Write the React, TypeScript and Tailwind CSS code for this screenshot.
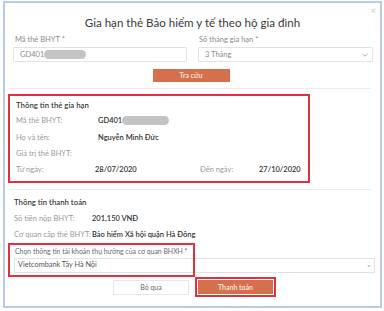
import React from "react";

const font = { fontFamily: "Lato, 'Open Sans', sans-serif" };

function Blur({ w }: { w: number }) {
  return (
    <span
      className="inline-block h-[9px] rounded-full bg-[#c4c4c4] blur-[0.6px] align-middle"
      style={{ width: w }}
    />
  );
}

function Chevron() {
  return (
    <svg width="6" height="4" viewBox="0 0 6 4" className="text-[#9a9a9a]">
      <path d="M0.5 0.8 L3 3.2 L5.5 0.8" fill="none" stroke="currentColor" strokeWidth="0.8" />
    </svg>
  );
}

export default function App() {
  return (
    <div className="w-[384px] h-[311px] bg-white overflow-hidden" style={font}>
      <div className="ml-[3px] mt-[1px] w-[379px] h-[307px] border-2 border-[#b5cbe7] bg-white relative">
        <span className="absolute right-[4px] top-[3px] text-[9px] leading-none text-[#c8c8c8]">×</span>
        {/* Title */}
        <div className="h-[30px] flex items-end justify-center pb-[4px]">
          <h1 className="text-[11.6px] leading-none text-[#3a3a3a]">Gia hạn thẻ Bảo hiểm y tế theo hộ gia đình</h1>
        </div>
        {/* Inputs */}
        <div className="flex gap-[11px] pl-[8px] pr-[5px] mt-[2px]">
          <div className="w-[174px]">
            <div className="text-[7.5px] leading-none text-[#8a8a8a] h-[12px] pl-[2px] pt-[1px]">Mã thẻ BHYT *</div>
            <div className="h-[15px] border border-[#e3e3e3] rounded-[1px] flex items-center pl-[6px] gap-0 text-[7.5px] text-[#8a8a8a]">
              <span>GD401</span>
              <Blur w={42} />
            </div>
          </div>
          <div className="w-[175px]">
            <div className="text-[7.5px] leading-none text-[#8a8a8a] h-[12px] pl-[1px] pt-[1px]">Số tháng gia hạn *</div>
            <div className="h-[15px] border border-[#e3e3e3] rounded-[1px] flex items-center justify-between pl-[6px] pr-[4px] text-[7.5px] text-[#8a8a8a]">
              <span>3 Tháng</span>
              <Chevron />
            </div>
          </div>
        </div>
        <div className="flex justify-center mt-[7px] pr-[3px]">
          <button className="w-[77px] h-[13px] bg-[#d4714c] text-white text-[7px] leading-none">Tra cứu</button>
        </div>
        <div className="mx-[4px] mt-[6px] mr-[9px] h-px bg-[#ececec]" />
        {/* Red box 1 */}
        <div className="ml-[3px] mt-[5px] w-[302px] h-[89px] border-2 border-[#e2303c] pl-[6px] text-[7.5px]">
          <div className="h-[16px] flex items-end text-[7.8px] text-[#3a3a3a] font-semibold leading-none pb-[2px]">Thông tin thẻ gia hạn</div>
          <div className="h-[17px] flex items-center">
            <span className="w-[82px] text-[#9a9a9a]">Mã thẻ BHYT:</span>
            <span className="text-[#333] font-semibold">GD401</span>
            <Blur w={47} />
          </div>
          <div className="h-[17px] flex items-center">
            <span className="w-[82px] text-[#9a9a9a]">Họ và tên:</span>
            <span className="text-[#333] font-semibold">Nguyễn Minh Đức</span>
          </div>
          <div className="h-[16px] flex items-center">
            <span className="w-[82px] text-[#9a9a9a]">Giá trị thẻ BHYT:</span>
          </div>
          <div className="h-[16px] flex items-center">
            <span className="w-[79px] text-[#9a9a9a]">Từ ngày:</span>
            <span className="w-[105px] text-[#333] font-semibold">28/07/2020</span>
            <span className="w-[59px] text-[#9a9a9a]">Đến ngày:</span>
            <span className="text-[#333] font-semibold">27/10/2020</span>
          </div>
        </div>
        <div className="ml-[4px] mr-[9px] mt-[6px] h-px bg-[#ececec]" />
        {/* Payment */}
        <div className="pl-[9px] text-[7.5px]">
          <div className="mt-[6px] h-[14px] flex items-center text-[7.8px] text-[#3a3a3a] font-semibold leading-none">Thông tin thanh toán</div>
          <div className="h-[17px] flex items-center">
            <span className="w-[78px] text-[#9a9a9a]">Số tiền nộp BHYT:</span>
            <span className="text-[#333] font-semibold">201,150 VNĐ</span>
          </div>
          <div className="h-[16px] flex items-center">
            <span className="w-[78px] text-[#9a9a9a]">Cơ quan cấp thẻ BHYT:</span>
            <span className="text-[#333] font-semibold">Bảo hiểm Xã hội quận Hà Đông</span>
          </div>
        </div>
        {/* Red box 2 with select */}
        <div className="relative ml-[3px] mr-[5px] mt-[0px] h-[34px] pt-[2px]">
          <div className="absolute left-0 top-0 w-[187px] h-[34px] border-2 border-[#e2303c] pointer-events-none z-10" />
          <div className="pl-[7px] text-[6.9px] leading-none text-[#6a6a6a] h-[13px] flex items-center">
            Chọn thông tin tài khoản thụ hưởng của cơ quan BHXH *
          </div>
          <div className="ml-[6px] h-[15px] border border-[#e3e3e3] flex items-center justify-between pl-[3px] pr-[4px] text-[7.3px] text-[#555]">
            <span>Vietcombank Tây Hà Nội</span>
            <span className="text-[#aaa] text-[6px] leading-none">▪</span>
          </div>
        </div>
        {/* Buttons */}
        <div className="flex items-center ml-[108px] gap-[6px]">
          <button className="w-[76px] h-[15px] border border-[#e6e6e6] bg-white text-[7px] text-[#666] leading-none">Bỏ qua</button>
          <div className="border-2 border-[#e2303c] p-px">
            <button className="block w-[75px] h-[14px] bg-[#d4714c] text-white text-[7px] leading-none">Thanh toán</button>
          </div>
        </div>
      </div>
    </div>
  );
}
